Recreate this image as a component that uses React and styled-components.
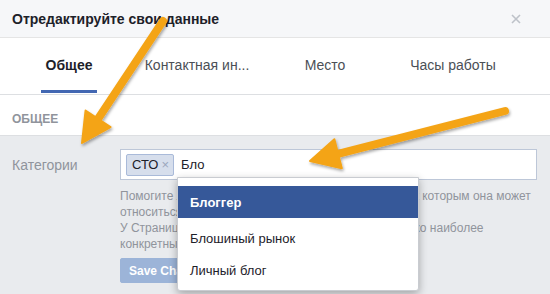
import React from 'react';
import styled, { createGlobalStyle } from 'styled-components';

const GlobalStyle = createGlobalStyle`
  html, body {
    margin: 0;
    padding: 0;
    background: #e9ebee;
  }
  body {
    font-family: "Liberation Sans", Arial, Helvetica, sans-serif;
    color: #1d2129;
  }
`;

const Modal = styled.div`
  position: relative;
  width: 550px;
  height: 294px;
  overflow: hidden;
  background: #e9ebee;
  display: flex;
  flex-direction: column;
`;

const Header = styled.div`
  height: 37px;
  flex-shrink: 0;
  display: flex;
  align-items: center;
  justify-content: space-between;
  padding: 0 29px 0 12px;
  background: #f6f7f9;
  border-bottom: 1px solid #e5e5e5;
`;

const Title = styled.div`
  font-size: 14px;
  font-weight: bold;
  color: #1d2129;
`;

const Close = styled.svg`
  width: 10px;
  height: 10px;
  stroke: #bec2c9;
  stroke-width: 1.6;
`;

const TabBar = styled.div`
  height: 56px;
  flex-shrink: 0;
  display: flex;
  padding-left: 5px;
  background: #fff;
  border-bottom: 1px solid #dddfe2;
`;

const Tab = styled.div`
  width: 128px;
  display: flex;
  justify-content: center;
`;

const TabLabel = styled.div`
  display: flex;
  align-items: center;
  padding: 2px 5px 0;
  margin-bottom: 1px;
  font-size: 14px;
  font-weight: ${p => (p.$active ? 'bold' : 'normal')};
  color: ${p => (p.$active ? '#1d2129' : '#4b4f56')};
  border-bottom: 3px solid ${p => (p.$active ? '#4267b2' : 'transparent')};
`;

const SectionTitle = styled.div`
  height: 32px;
  flex-shrink: 0;
  display: flex;
  align-items: center;
  padding: 8px 12px 0;
  background: #fff;
  border-bottom: 1px solid #dddfe2;
  font-size: 12px;
  font-weight: bold;
  color: #90949c;
`;

const Body = styled.div`
  flex: 1;
  display: flex;
  padding: 13px 13px 0 12px;
`;

const Label = styled.div`
  width: 108px;
  flex-shrink: 0;
  height: 31px;
  display: flex;
  align-items: center;
  font-size: 14px;
  color: #90949c;
`;

const Field = styled.div`
  flex: 1;
  min-width: 0;
  display: flex;
  flex-direction: column;
  align-items: flex-start;
`;

const InputBox = styled.div`
  position: relative;
  box-sizing: border-box;
  width: 100%;
  height: 31px;
  display: flex;
  align-items: center;
  gap: 7px;
  padding: 0 5px;
  background: #fff;
  border: 1px solid #bdc7d8;
`;

const Token = styled.span`
  display: flex;
  align-items: center;
  gap: 3px;
  height: 20px;
  padding: 0 4px 0 5px;
  background: #d6deec;
  border: 1px solid #a9bad9;
  border-radius: 2px;
  font-size: 13px;
  color: #1d2129;
`;

const TokenRemove = styled.span`
  font-size: 13px;
  color: #9aa6bd;
`;

const Typed = styled.span`
  font-size: 13px;
  color: #1d2129;
`;

const Dropdown = styled.div`
  position: absolute;
  left: 56px;
  top: 27px;
  width: 240px;
  padding: 8px 0 4px;
  background: #fff;
  border: 1px solid #c9ccd1;
  border-radius: 0 0 3px 3px;
  box-shadow: 0 3px 8px rgba(0, 0, 0, 0.3);
  z-index: 2;
`;

const Option = styled.div`
  height: 32px;
  display: flex;
  align-items: center;
  padding-left: 12px;
  margin-bottom: ${p => (p.$selected ? '4px' : '0')};
  font-size: 13px;
  font-weight: ${p => (p.$selected ? 'bold' : 'normal')};
  color: ${p => (p.$selected ? '#fff' : '#1d2129')};
  background: ${p => (p.$selected ? '#365899' : 'transparent')};
`;

const Help = styled.div`
  margin-top: 8px;
  font-size: 12px;
  line-height: 16px;
  color: #90949c;
  white-space: nowrap;
`;

const SaveButton = styled.button`
  margin-top: 6px;
  height: 25px;
  padding: 0 8px;
  border: 1px solid #9cb4d8;
  border-radius: 2px;
  background: #9cb4d8;
  color: #fff;
  font-family: inherit;
  font-size: 12px;
  font-weight: bold;
`;

const Arrows = styled.svg`
  position: absolute;
  left: 0;
  top: 0;
  width: 550px;
  height: 294px;
  pointer-events: none;
  z-index: 5;
`;

const ORANGE = '#f4a417';

const Arrow = ({ from, tip, head = 29, half = 15 }) => {
  const dx = tip[0] - from[0];
  const dy = tip[1] - from[1];
  const len = Math.hypot(dx, dy);
  const ux = dx / len;
  const uy = dy / len;
  const bx = tip[0] - ux * head;
  const by = tip[1] - uy * head;
  const w1 = [bx - uy * half, by + ux * half];
  const w2 = [bx + uy * half, by - ux * half];
  return (
    <g filter="url(#arrowShadow)">
      <line
        x1={from[0]}
        y1={from[1]}
        x2={bx + ux * 2}
        y2={by + uy * 2}
        stroke={ORANGE}
        strokeWidth="8"
        strokeLinecap="round"
      />
      <polygon
        points={`${tip[0]},${tip[1]} ${w1[0]},${w1[1]} ${w2[0]},${w2[1]}`}
        fill={ORANGE}
        stroke={ORANGE}
        strokeWidth="2"
        strokeLinejoin="round"
      />
    </g>
  );
};

const tabs = ['Общее', 'Контактная ин...', 'Место', 'Часы работы'];

const App = () => {
  return (
    <>
      <GlobalStyle />
      <Modal>
        <Header>
          <Title>Отредактируйте свои данные</Title>
          <Close viewBox="0 0 10 10">
            <path d="M1 1L9 9M9 1L1 9" />
          </Close>
        </Header>
        <TabBar>
          {tabs.map((t, i) => (
            <Tab key={t}>
              <TabLabel $active={i === 0}>{t}</TabLabel>
            </Tab>
          ))}
        </TabBar>
        <SectionTitle>ОБЩЕЕ</SectionTitle>
        <Body>
          <Label>Категории</Label>
          <Field>
            <InputBox>
              <Token>
                СТО <TokenRemove>×</TokenRemove>
              </Token>
              <Typed>Бло</Typed>
              <Dropdown>
                <Option $selected>Блоггер</Option>
                <Option>Блошиный рынок</Option>
                <Option>Личный блог</Option>
              </Dropdown>
            </InputBox>
            <Help>
              Помогите людям найти Страницу, указав категории, к которым она может
              <br />
              относиться ваша компания.
              <br />
              У Страницы может быть 3 категории. Выберите только наиболее
              <br />
              конкретные категории.
            </Help>
            <SaveButton>Save Changes</SaveButton>
          </Field>
        </Body>
        <Arrows viewBox="0 0 550 294">
          <defs>
            <filter id="arrowShadow" x="-20%" y="-20%" width="140%" height="140%">
              <feDropShadow dx="1" dy="2" stdDeviation="1.6" floodColor="#000" floodOpacity="0.35" />
            </filter>
          </defs>
          <Arrow from={[163, 21]} tip={[82, 143]} />
          <Arrow from={[505, 111]} tip={[310, 161]} />
        </Arrows>
      </Modal>
    </>
  );
};

export default App;
